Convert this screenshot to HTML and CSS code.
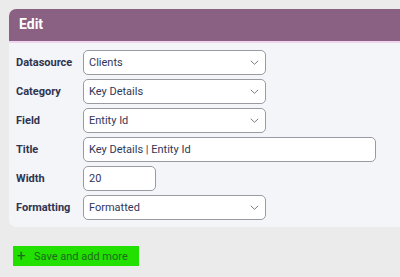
FILE: index.html
```html
<!DOCTYPE html>
<html>
<head>
<meta charset="utf-8">
<link rel="stylesheet" href="styles.css">
</head>
<body>
<div class="page">
  <div class="card">
    <div class="card-header">Edit</div>
    <div class="card-body">
      <div class="row">
        <label class="label">Datasource</label>
        <div class="field select">Clients<svg class="chev" viewBox="0 0 9 5" width="9" height="5"><path d="M0.8 0.8l3.7 3.5 3.7-3.5" fill="none" stroke="#777a86" stroke-width="1"/></svg></div>
      </div>
      <div class="row">
        <label class="label">Category</label>
        <div class="field select">Key Details<svg class="chev" viewBox="0 0 9 5" width="9" height="5"><path d="M0.8 0.8l3.7 3.5 3.7-3.5" fill="none" stroke="#777a86" stroke-width="1"/></svg></div>
      </div>
      <div class="row">
        <label class="label">Field</label>
        <div class="field select">Entity Id<svg class="chev" viewBox="0 0 9 5" width="9" height="5"><path d="M0.8 0.8l3.7 3.5 3.7-3.5" fill="none" stroke="#777a86" stroke-width="1"/></svg></div>
      </div>
      <div class="row">
        <label class="label">Title</label>
        <div class="field text-wide">Key Details | Entity Id</div>
      </div>
      <div class="row">
        <label class="label">Width</label>
        <div class="field text-short">20</div>
      </div>
      <div class="row">
        <label class="label">Formatting</label>
        <div class="field select">Formatted<svg class="chev" viewBox="0 0 9 5" width="9" height="5"><path d="M0.8 0.8l3.7 3.5 3.7-3.5" fill="none" stroke="#777a86" stroke-width="1"/></svg></div>
      </div>
    </div>
  </div>
  <div class="actions">
    <button class="btn-add"><span class="plus">+</span>Save and add more</button>
  </div>
</div>
</body>
</html>
```
FILE: styles.css
```css
html, body {
  margin: 0;
  padding: 0;
  background: #ebebeb;
  overflow: hidden;
  width: 400px;
  height: 277px;
}
.page {
  padding: 9px 0 0 9px;
  font-family: Roboto, "Liberation Sans", sans-serif;
}
.card {
  background: #f4f5f9;
  border-radius: 7px 0 0 7px;
}
.card-header {
  height: 34px;
  box-sizing: border-box;
  background: #8b6183;
  border-bottom: 2px solid #efd6ef;
  border-radius: 7px 0 0 0;
  color: #fff;
  font-weight: 700;
  font-size: 14px;
  line-height: 30px;
  padding-left: 10px;
}
.card-body {
  padding: 7px 0 7px 7px;
  display: flex;
  flex-direction: column;
  gap: 4px;
}
.row {
  display: flex;
  align-items: center;
  height: 25px;
}
.label {
  width: 67px;
  font-size: 11px;
  font-weight: 700;
  color: #2f3450;
}
.field {
  box-sizing: border-box;
  height: 25px;
  background: #fff;
  border: 1px solid #9a9aa2;
  border-radius: 5px;
  font-size: 11px;
  color: #30375a;
  padding-left: 5px;
  display: flex;
  align-items: center;
}
.select {
  width: 183px;
  justify-content: space-between;
  padding-right: 6px;
}
.text-wide {
  width: 293px;
}
.text-short {
  width: 73px;
}
.actions {
  padding: 19px 0 0 4px;
}
.btn-add {
  display: flex;
  align-items: center;
  height: 20px;
  width: 126px;
  padding: 0 0 0 4px;
  border: none;
  background: #22e000;
  color: #1d6b1d;
  font-family: Roboto, "Liberation Sans", sans-serif;
  font-size: 11px;
}
.plus {
  font-size: 15px;
  width: 17px;
  text-align: left;
  line-height: 1;
}
```
